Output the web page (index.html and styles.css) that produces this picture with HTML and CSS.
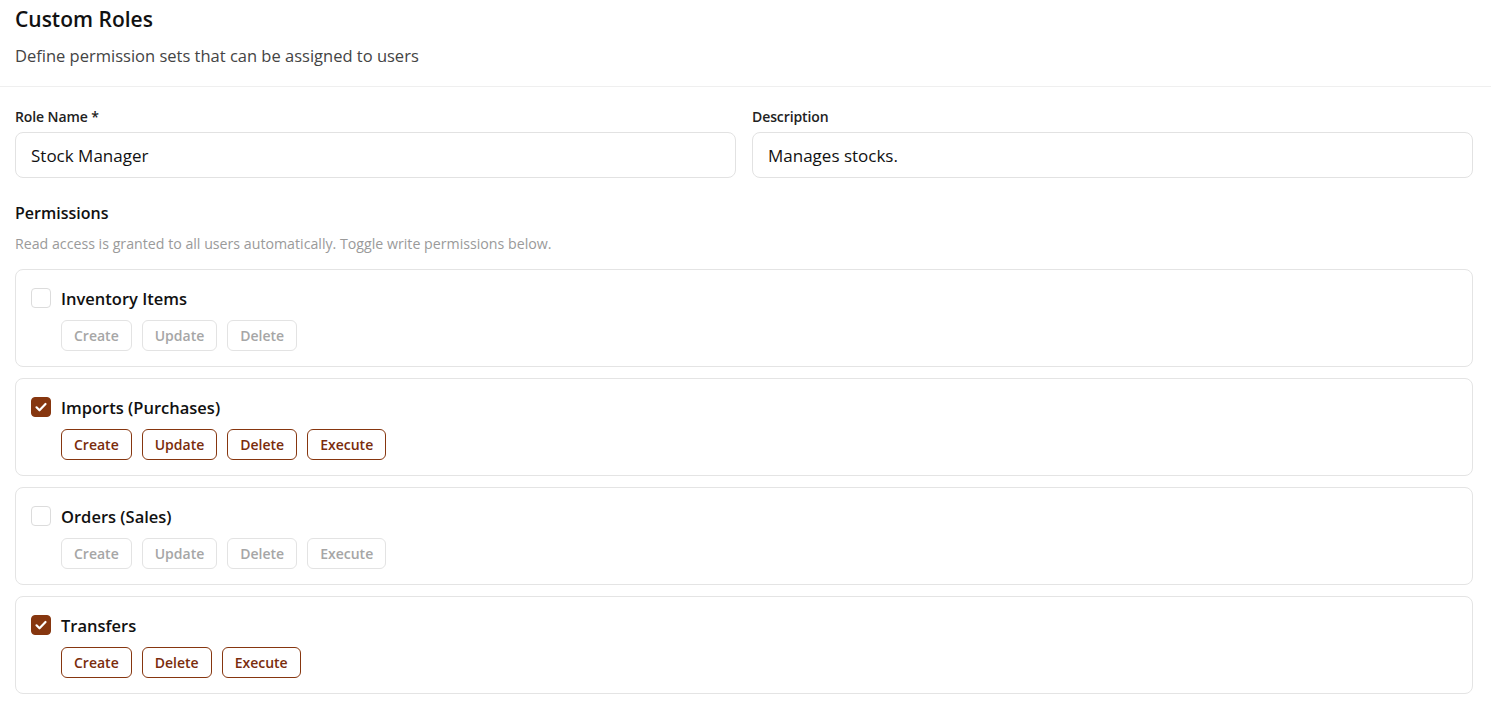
FILE: index.html
```html
<!DOCTYPE html>
<html lang="en">
<head>
<meta charset="utf-8">
<title>Custom Roles</title>
<link rel="stylesheet" href="styles.css">
</head>
<body>
<header class="page-header">
  <h1 class="title">Custom Roles</h1>
  <p class="subtitle">Define permission sets that can be assigned to users</p>
</header>
<main class="content">
  <div class="fields">
    <div class="field">
      <label class="field-label">Role Name *</label>
      <div class="input">Stock Manager</div>
    </div>
    <div class="field">
      <label class="field-label">Description</label>
      <div class="input">Manages stocks.</div>
    </div>
  </div>

  <h2 class="section-title">Permissions</h2>
  <p class="section-hint">Read access is granted to all users automatically. Toggle write permissions below.</p>

  <div class="cards">
    <section class="card">
      <div class="card-head">
        <span class="checkbox"></span>
        <span class="card-title">Inventory Items</span>
      </div>
      <div class="actions">
        <span class="btn">Create</span>
        <span class="btn">Update</span>
        <span class="btn">Delete</span>
      </div>
    </section>

    <section class="card">
      <div class="card-head">
        <span class="checkbox checked"><svg viewBox="0 0 20 20" width="20" height="20"><path d="M5.5 10.3l3 3 6-6.3" fill="none" stroke="#fff" stroke-width="2.2" stroke-linecap="round" stroke-linejoin="round"/></svg></span>
        <span class="card-title">Imports (Purchases)</span>
      </div>
      <div class="actions">
        <span class="btn on">Create</span>
        <span class="btn on">Update</span>
        <span class="btn on">Delete</span>
        <span class="btn on">Execute</span>
      </div>
    </section>

    <section class="card">
      <div class="card-head">
        <span class="checkbox"></span>
        <span class="card-title">Orders (Sales)</span>
      </div>
      <div class="actions">
        <span class="btn">Create</span>
        <span class="btn">Update</span>
        <span class="btn">Delete</span>
        <span class="btn">Execute</span>
      </div>
    </section>

    <section class="card">
      <div class="card-head">
        <span class="checkbox checked"><svg viewBox="0 0 20 20" width="20" height="20"><path d="M5.5 10.3l3 3 6-6.3" fill="none" stroke="#fff" stroke-width="2.2" stroke-linecap="round" stroke-linejoin="round"/></svg></span>
        <span class="card-title">Transfers</span>
      </div>
      <div class="actions">
        <span class="btn on">Create</span>
        <span class="btn on">Delete</span>
        <span class="btn on">Execute</span>
      </div>
    </section>
  </div>
</main>
</body>
</html>
```

FILE: styles.css
```css
* { box-sizing: border-box; }
html, body { margin: 0; padding: 0; background: #fff; }
body {
  font-family: "Segoe UI", "Open Sans", "Noto Sans", sans-serif;
  color: #111;
}
.page-header {
  padding: 5px 18px 18px 15px;
  border-bottom: 1px solid #efefef;
}
.title {
  margin: 0;
  font-size: 21px;
  line-height: 28px;
  font-weight: 600;
  color: #111;
}
.subtitle {
  margin: 10px 0 0;
  font-size: 16.5px;
  line-height: 25px;
  color: #444;
}
.content {
  padding: 20px 18px 20px 15px;
}
.fields {
  display: grid;
  grid-template-columns: 1fr 1fr;
  gap: 16px;
}
.field-label {
  display: block;
  font-size: 14px;
  line-height: 20px;
  font-weight: 600;
  color: #222;
  margin-bottom: 5px;
  letter-spacing: -0.1px;
}
.input {
  height: 46px;
  border: 1px solid #e2e2e2;
  border-radius: 8px;
  padding: 0 15px;
  display: flex;
  align-items: center;
  font-size: 17px;
  color: #111;
}
.section-title {
  margin: 23px 0 0;
  font-size: 16px;
  line-height: 24px;
  font-weight: 600;
  color: #111;
}
.section-hint {
  margin: 9px 0 0;
  font-size: 14.2px;
  line-height: 20px;
  color: #9a9a9a;
}
.cards {
  margin-top: 15px;
  display: flex;
  flex-direction: column;
  gap: 11px;
}
.card {
  border: 1px solid #e4e4e4;
  border-radius: 8px;
  padding: 16px 15px 15px;
}
.card-head {
  display: flex;
  align-items: center;
  gap: 10px;
  height: 24px;
}
.checkbox {
  width: 20px;
  height: 20px;
  border: 1px solid #dcdcdc;
  border-radius: 4px;
  background: #fff;
  display: inline-flex;
  flex: none;
}
.checkbox.checked {
  background: #86360f;
  border-color: #86360f;
}
.checkbox svg { display: block; margin: -1px; }
.card-title {
  font-size: 16.5px;
  font-weight: 600;
  color: #111;
}
.actions {
  display: flex;
  gap: 10px;
  margin-top: 10px;
  padding-left: 30px;
}
.btn {
  display: inline-flex;
  align-items: center;
  height: 31px;
  font-size: 14px;
  padding: 0 12px;
  border: 1px solid #e3e3e3;
  border-radius: 6px;
  color: #a6a6a6;
  font-weight: 600;
}
.btn.on {
  border-color: #86360f;
  color: #7a2c0c;
}
```
